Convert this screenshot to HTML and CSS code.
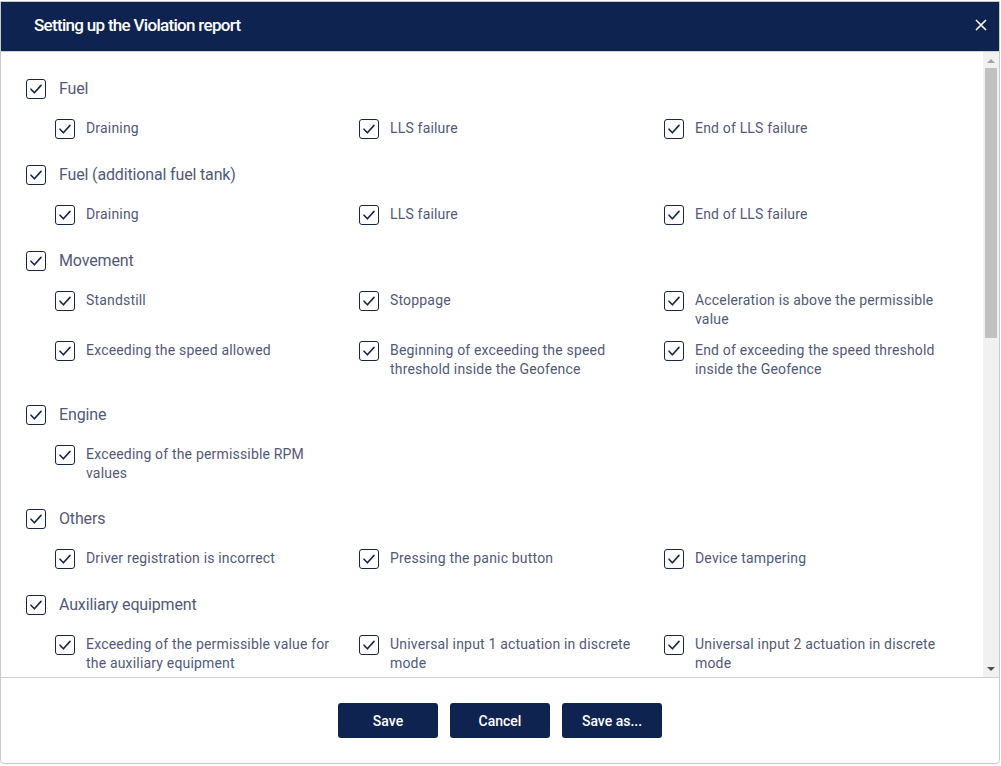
FILE: index.html
```html
<!DOCTYPE html>
<html lang="en">
<head>
<meta charset="utf-8">
<title>Setting up the Violation report</title>
<link rel="stylesheet" href="styles.css">
</head>
<body>
<div class="dialog">
  <header class="dlg-head">
    <h1 class="dlg-title">Setting up the Violation report</h1>
    <button class="dlg-close" aria-label="Close">
      <svg width="12" height="12" viewBox="0 0 12 12"><path d="M1 1L11 11M11 1L1 11" stroke="#fff" stroke-width="1.6" fill="none"/></svg>
    </button>
  </header>

  <div class="dlg-main">
    <div class="dlg-body">
      <section class="group">
        <label class="check head"><span class="box"><svg viewBox="0 0 20 20"><path d="M5 10.2l3.4 3.6L15 6.4"/></svg></span><span class="txt">Fuel</span></label>
        <div class="items">
          <label class="check"><span class="box"><svg viewBox="0 0 20 20"><path d="M5 10.2l3.4 3.6L15 6.4"/></svg></span><span class="txt">Draining</span></label>
          <label class="check"><span class="box"><svg viewBox="0 0 20 20"><path d="M5 10.2l3.4 3.6L15 6.4"/></svg></span><span class="txt">LLS failure</span></label>
          <label class="check"><span class="box"><svg viewBox="0 0 20 20"><path d="M5 10.2l3.4 3.6L15 6.4"/></svg></span><span class="txt">End of LLS failure</span></label>
        </div>
      </section>

      <section class="group">
        <label class="check head"><span class="box"><svg viewBox="0 0 20 20"><path d="M5 10.2l3.4 3.6L15 6.4"/></svg></span><span class="txt">Fuel (additional fuel tank)</span></label>
        <div class="items">
          <label class="check"><span class="box"><svg viewBox="0 0 20 20"><path d="M5 10.2l3.4 3.6L15 6.4"/></svg></span><span class="txt">Draining</span></label>
          <label class="check"><span class="box"><svg viewBox="0 0 20 20"><path d="M5 10.2l3.4 3.6L15 6.4"/></svg></span><span class="txt">LLS failure</span></label>
          <label class="check"><span class="box"><svg viewBox="0 0 20 20"><path d="M5 10.2l3.4 3.6L15 6.4"/></svg></span><span class="txt">End of LLS failure</span></label>
        </div>
      </section>

      <section class="group">
        <label class="check head"><span class="box"><svg viewBox="0 0 20 20"><path d="M5 10.2l3.4 3.6L15 6.4"/></svg></span><span class="txt">Movement</span></label>
        <div class="items">
          <label class="check"><span class="box"><svg viewBox="0 0 20 20"><path d="M5 10.2l3.4 3.6L15 6.4"/></svg></span><span class="txt">Standstill</span></label>
          <label class="check"><span class="box"><svg viewBox="0 0 20 20"><path d="M5 10.2l3.4 3.6L15 6.4"/></svg></span><span class="txt">Stoppage</span></label>
          <label class="check"><span class="box"><svg viewBox="0 0 20 20"><path d="M5 10.2l3.4 3.6L15 6.4"/></svg></span><span class="txt">Acceleration is above the permissible value</span></label>
          <label class="check"><span class="box"><svg viewBox="0 0 20 20"><path d="M5 10.2l3.4 3.6L15 6.4"/></svg></span><span class="txt">Exceeding the speed allowed</span></label>
          <label class="check"><span class="box"><svg viewBox="0 0 20 20"><path d="M5 10.2l3.4 3.6L15 6.4"/></svg></span><span class="txt">Beginning of exceeding the speed threshold inside the Geofence</span></label>
          <label class="check"><span class="box"><svg viewBox="0 0 20 20"><path d="M5 10.2l3.4 3.6L15 6.4"/></svg></span><span class="txt">End of exceeding the speed threshold inside the Geofence</span></label>
        </div>
      </section>

      <section class="group">
        <label class="check head"><span class="box"><svg viewBox="0 0 20 20"><path d="M5 10.2l3.4 3.6L15 6.4"/></svg></span><span class="txt">Engine</span></label>
        <div class="items">
          <label class="check"><span class="box"><svg viewBox="0 0 20 20"><path d="M5 10.2l3.4 3.6L15 6.4"/></svg></span><span class="txt">Exceeding of the permissible RPM values</span></label>
        </div>
      </section>

      <section class="group">
        <label class="check head"><span class="box"><svg viewBox="0 0 20 20"><path d="M5 10.2l3.4 3.6L15 6.4"/></svg></span><span class="txt">Others</span></label>
        <div class="items">
          <label class="check"><span class="box"><svg viewBox="0 0 20 20"><path d="M5 10.2l3.4 3.6L15 6.4"/></svg></span><span class="txt">Driver registration is incorrect</span></label>
          <label class="check"><span class="box"><svg viewBox="0 0 20 20"><path d="M5 10.2l3.4 3.6L15 6.4"/></svg></span><span class="txt">Pressing the panic button</span></label>
          <label class="check"><span class="box"><svg viewBox="0 0 20 20"><path d="M5 10.2l3.4 3.6L15 6.4"/></svg></span><span class="txt">Device tampering</span></label>
        </div>
      </section>

      <section class="group">
        <label class="check head"><span class="box"><svg viewBox="0 0 20 20"><path d="M5 10.2l3.4 3.6L15 6.4"/></svg></span><span class="txt">Auxiliary equipment</span></label>
        <div class="items">
          <label class="check"><span class="box"><svg viewBox="0 0 20 20"><path d="M5 10.2l3.4 3.6L15 6.4"/></svg></span><span class="txt">Exceeding of the permissible value for the auxiliary equipment</span></label>
          <label class="check"><span class="box"><svg viewBox="0 0 20 20"><path d="M5 10.2l3.4 3.6L15 6.4"/></svg></span><span class="txt">Universal input 1 actuation in discrete mode</span></label>
          <label class="check"><span class="box"><svg viewBox="0 0 20 20"><path d="M5 10.2l3.4 3.6L15 6.4"/></svg></span><span class="txt">Universal input 2 actuation in discrete mode</span></label>
        </div>
      </section>
    </div>

    <div class="vscroll" aria-hidden="true">
      <div class="sb-btn"><svg width="8" height="5" viewBox="0 0 8 5"><path d="M0 5L4 1L8 5Z" fill="#a3a3a3"/></svg></div>
      <div class="sb-track"><div class="sb-thumb"></div></div>
      <div class="sb-btn"><svg width="8" height="5" viewBox="0 0 8 5"><path d="M0 0L8 0L4 4Z" fill="#505050"/></svg></div>
    </div>
  </div>

  <footer class="dlg-foot">
    <button class="btn">Save</button>
    <button class="btn">Cancel</button>
    <button class="btn">Save as...</button>
  </footer>
</div>
</body>
</html>
```

FILE: styles.css
```css
* { box-sizing: border-box; }

html, body {
  margin: 0;
  padding: 0;
  background: #ffffff;
}

body {
  font-family: Roboto, "Liberation Sans", Arial, sans-serif;
  padding-top: 1px;
}

.dialog {
  width: 1000px;
  height: 763px;
  border: 1px solid #c9c9c9;
  border-radius: 0 0 4px 4px;
  display: flex;
  flex-direction: column;
  background: #fff;
  overflow: hidden;
}

.dlg-head {
  flex: 0 0 50px;
  height: 50px;
  background: #0f2350;
  border-bottom: 1px solid #d0d0d0;
  display: flex;
  align-items: center;
  justify-content: space-between;
  padding: 0 12px 3px 33px;
}

.dlg-title {
  margin: 0;
  color: #ffffff;
  font-size: 17px;
  font-weight: 500;
  letter-spacing: -0.7px;
}

.dlg-close {
  border: 0;
  background: transparent;
  padding: 0;
  width: 12px;
  height: 12px;
  display: flex;
  cursor: pointer;
}

.dlg-main {
  flex: 1 1 auto;
  min-height: 0;
  display: flex;
}

.dlg-body {
  flex: 1 1 auto;
  overflow: hidden;
  padding: 27px 14px 0 25px;
}

.vscroll {
  flex: 0 0 16px;
  background: #f1f1f1;
  display: flex;
  flex-direction: column;
}

.sb-btn {
  flex: 0 0 16px;
  display: flex;
  align-items: center;
  justify-content: center;
}

.sb-track {
  flex: 1 1 auto;
  padding: 0 2px;
}

.sb-thumb {
  height: 270px;
  background: #c1c1c1;
}

.group {
  margin-bottom: 26px;
}

.group + .group {
  margin-top: 0;
}

.check {
  display: flex;
  align-items: flex-start;
  color: #525978;
  cursor: pointer;
}

.box {
  flex: 0 0 20px;
  width: 20px;
  height: 20px;
  border: 1.5px solid #17254a;
  border-radius: 3px;
  display: flex;
  align-items: center;
  justify-content: center;
  background: #fff;
}

.box svg {
  width: 20px;
  height: 20px;
  flex: 0 0 20px;
}

.box path {
  fill: none;
  stroke: #17254a;
  stroke-width: 1.6;
  stroke-linecap: round;
  stroke-linejoin: round;
}

.head .txt {
  font-size: 16px;
  line-height: 20px;
  margin-left: 13px;
  letter-spacing: -0.15px;
}

.items {
  margin: 20px 0 0 29px;
  display: grid;
  grid-template-columns: 304px 305px 304px;
  row-gap: 12px;
}

.items .txt {
  font-size: 14px;
  line-height: 19px;
  margin-left: 11px;
  max-width: 250px;
  letter-spacing: 0.18px;
}

.dlg-foot {
  flex: 0 0 86px;
  border-top: 1px solid #cfcfcf;
  display: flex;
  justify-content: center;
  align-items: flex-start;
  gap: 12px;
  padding-top: 25px;
}

.btn {
  width: 100px;
  height: 35px;
  border: 0;
  border-radius: 3px;
  background: #0f2350;
  color: #ffffff;
  font-family: Roboto, "Liberation Sans", Arial, sans-serif;
  font-size: 14px;
  font-weight: 500;
  cursor: pointer;
}
```
